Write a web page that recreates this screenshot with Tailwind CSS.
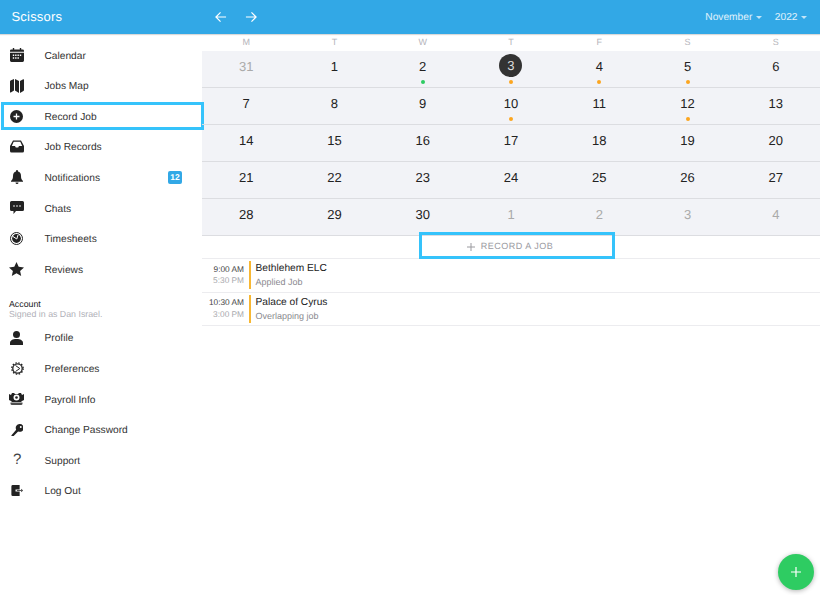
<!DOCTYPE html>
<html lang="en">
<head>
  <meta charset="UTF-8" />
  <title>Scissors</title>
  <script src="https://cdn.jsdelivr.net/npm/@tailwindcss/browser@4"></script>
</head>
<body class="w-[820px] h-[595px] overflow-hidden bg-white font-['Liberation_Sans',Arial,sans-serif] [text-rendering:geometricPrecision] text-[#222] relative">

  <!-- Top bar -->
  <header class="h-[34px] bg-[#32a8e6] flex items-center text-white shadow-[0_1px_1px_rgba(0,0,0,0.15)] relative z-10">
    <div class="w-[202px] pl-[11.5px] text-[13px] font-medium tracking-[0.2px]">Scissors</div>
    <div class="flex items-center gap-[18px] pl-[12.5px]">
      <svg class="w-[12px] h-[12px]" viewBox="0 0 13 13" fill="none" stroke="white" stroke-width="1.3"><path d="M12 6.5H1M6 1.5l-5 5 5 5"/></svg>
      <svg class="w-[12px] h-[12px]" viewBox="0 0 13 13" fill="none" stroke="white" stroke-width="1.3"><path d="M1 6.5h11M7 1.5l5 5-5 5"/></svg>
    </div>
    <div class="ml-auto flex items-center gap-[13px] pr-[13px] pt-[1px] text-[10.2px] text-white/85">
      <span class="flex items-center gap-[3.5px]">November <i class="block w-0 h-0 border-x-[3px] border-x-transparent border-t-[3px] border-t-white/70"></i></span>
      <span class="flex items-center gap-[3.5px]">2022 <i class="block w-0 h-0 border-x-[3px] border-x-transparent border-t-[3px] border-t-white/70"></i></span>
    </div>
  </header>

  <div class="flex h-[561px]">
    <!-- Sidebar -->
    <aside class="w-[202px] shrink-0 pt-[7px] text-[10.2px] text-[#333]">
      <a class="h-[30.6px] flex items-center pl-[44.5px] relative">
        <svg class="absolute left-[9.5px] top-[6.7px] w-[14px] h-[14px]" viewBox="0 0 15 15" fill="#222"><path d="M3 0h1.5v1.5h6V0H12v1.5h1.5A1.5 1.5 0 0 1 15 3v1H0V3a1.5 1.5 0 0 1 1.5-1.5H3z"/><path fill-rule="evenodd" d="M0 5h15v8.5a1.500 1.500 0 0 1-1.500 1.500h-12A1.500 1.500 0 0 1 0 13.500zM3 7v1.500h1.500V7zm2.500 0v1.500H7V7zM8 7v1.500h1.500V7zm2.500 0v1.500H12V7zM3 10v1.500h1.500V10zm2.500 0v1.500H7V10zM8 10v1.500h1.500V10z"/></svg>
        Calendar
      </a>
      <a class="h-[30.6px] flex items-center pl-[44.5px] relative">
        <svg class="absolute left-[9.5px] top-[7px] w-[14px] h-[14px]" viewBox="0 0 14 14" fill="#222"><path d="M0 2.500Q0 1.800.6 1.500L4 0v11.500L.8 13.500Q0 13.800 0 13zM5 0l4 2v12l-4-2.500zM10 2 13.200.2Q14 0 14 .8V11q0 .7-.6 1L10 14z"/></svg>
        Jobs Map
      </a>
      <a class="h-[30.6px] flex items-center pl-[44.5px] relative">
        <svg class="absolute left-[10.3px] top-[8px] w-[13px] h-[13px]" viewBox="0 0 13 13"><circle cx="6.500" cy="6.500" r="6.500" fill="#222"/><path d="M6.500 3.500v6M3.500 6.500h6" stroke="#fff" stroke-width="1.300"/></svg>
        Record Job
        <span class="absolute left-[1px] top-0 w-[203px] h-[28px] border-[3px] border-[#35c3fb]"></span>
      </a>
      <a class="h-[30.6px] flex items-center pl-[44.5px] relative">
        <svg class="absolute left-[10px] top-[7.2px] w-[14px] h-[13px]" viewBox="0 0 14 12" fill="#222"><path fill-rule="evenodd" d="M3 0h8l3 5.500V10.500A1.500 1.500 0 0 1 12.500 12h-11A1.500 1.500 0 0 1 0 10.500V5.500zM3.700 1.200 1.800 5.500H5l.8 1.500h2.400L9 5.500h3.200L10.300 1.200z"/></svg>
        Job Records
      </a>
      <a class="h-[30.6px] flex items-center pl-[44.5px] relative">
        <svg class="absolute left-[10.7px] top-[6.6px] w-[12px] h-[14px]" viewBox="0 0 12 14" fill="#222"><path d="M6 0a1 1 0 0 1 1 1v.6C9 2 10 3.600 10 6c0 2.500.6 3.600 2 5v.8H0V11c1.400-1.400 2-2.500 2-5 0-2.400 1-4 3-4.400V1a1 1 0 0 1 1-1zM4.500 12.500h3a1.500 1.500 0 0 1-3 0z"/></svg>
        Notifications
        <span class="absolute left-[168px] top-[7.5px] w-[14px] h-[13px] rounded-[2px] bg-[#32a8e6] text-white text-[8.5px] font-bold leading-[13px] text-center">12</span>
      </a>
      <a class="h-[30.6px] flex items-center pl-[44.5px] relative">
        <svg class="absolute left-[9.5px] top-[7px] w-[14px] h-[14px]" viewBox="0 0 14 14" fill="#222"><path d="M1.500 0h11A1.500 1.500 0 0 1 14 1.500v7a1.500 1.500 0 0 1-1.500 1.500H6l-2.500 3V10h-2A1.500 1.500 0 0 1 0 8.500v-7A1.500 1.500 0 0 1 1.500 0z"/><circle cx="4" cy="5" r=".8" fill="#fff"/><circle cx="7" cy="5" r=".8" fill="#fff"/><circle cx="10" cy="5" r=".8" fill="#fff"/></svg>
        Chats
      </a>
      <a class="h-[30.6px] flex items-center pl-[44.5px] relative">
        <svg class="absolute left-[10px] top-[7px] w-[13px] h-[13px]" viewBox="0 0 13 13" fill="none"><circle cx="6.500" cy="6.500" r="6" stroke="#222" stroke-width="1"/><circle cx="6.500" cy="6.500" r="4.400" fill="#222"/><path d="M3 4.500 6.800 7 8 3" stroke="#fff" stroke-width="1"/></svg>
        Timesheets
      </a>
      <a class="h-[30.6px] flex items-center pl-[44.5px] relative">
        <svg class="absolute left-[9.3px] top-[6.5px] w-[15px] h-[14px]" viewBox="0 0 15 14" fill="#222"><path d="M7.500 0l2.200 4.800 5.300.6-3.900 3.500 1.100 5.100-4.700-2.700L2.800 14l1.100-5.100L0 5.400l5.300-.6z"/></svg>
        Reviews
      </a>

      <div class="mt-[13px] mb-[5px] pl-[9px] text-[8.8px] leading-[10px]">
        <div class="text-[#222]">Account</div>
        <div class="text-[#b0b0b8]">Signed in as Dan Israel.</div>
      </div>

      <a class="h-[30.6px] flex items-center pl-[44.5px] relative">
        <svg class="absolute left-[10px] top-[7.3px] w-[13px] h-[14px]" viewBox="0 0 13 14" fill="#222"><circle cx="6.500" cy="3.500" r="3.500"/><path d="M0 14v-2c0-2.500 2.500-4 6.500-4s6.500 1.500 6.500 4v2z"/></svg>
        Profile
      </a>
      <a class="h-[30.6px] flex items-center pl-[44.5px] relative">
        <svg class="absolute left-[10.5px] top-[8px] w-[13px] h-[13px]" viewBox="0 0 13 13" fill="none" stroke="#222"><circle cx="6.500" cy="6.500" r="4.700" stroke-width="1.300"/><circle cx="6.500" cy="6.500" r="5.700" stroke-width="1.300" stroke-dasharray="1.500 1.500"/><path d="M4.500 3.500 8.800 6.500l-4.300 3" stroke-width="1"/></svg>
        Preferences
      </a>
      <a class="h-[30.6px] flex items-center pl-[44.5px] relative">
        <svg class="absolute left-[9.3px] top-[8.3px] w-[15px] h-[12px]" viewBox="0 0 15 12" fill="#222"><path fill-rule="evenodd" d="M0 1 2 2 3 0h2l1 1h3l1-1h2l1 2 2-1v6l-2 1-1 1H3L2 8 0 7zM7.500 1.500a3 3 0 1 0 0 6 3 3 0 0 0 0-6z"/><circle cx="7.500" cy="4.500" r="1.300"/><path d="M1.500 9.500h12v1A1.500 1.500 0 0 1 12 12H3a1.500 1.500 0 0 1-1.500-1.500z" opacity=".8"/></svg>
        Payroll Info
      </a>
      <a class="h-[30.6px] flex items-center pl-[44.5px] relative">
        <svg class="absolute left-[10.7px] top-[8px] w-[12.7px] h-[12.7px]" viewBox="0 0 13 13" fill="#222"><path fill-rule="evenodd" d="M9 0a4 4 0 1 1-1.700 7.600L2.500 12.500 1 13 .3 11.800 5.300 5.800A4 4 0 0 1 9 0zm1 2a1 1 0 1 0 0 2 1 1 0 0 0 0-2z"/></svg>
        Change Password
      </a>
      <a class="h-[30.6px] flex items-center pl-[44.5px] relative">
        <span class="absolute left-[13px] top-[6px] text-[15px] leading-[16px] text-[#444]">?</span>
        Support
      </a>
      <a class="h-[30.6px] flex items-center pl-[44.5px] relative">
        <svg class="absolute left-[10.7px] top-[8.7px] w-[12.7px] h-[11px]" viewBox="0 0 13 12" fill="#222"><path d="M1.500 0H9v4.800H4.500v2.400H9V12H1.500A1.500 1.500 0 0 1 0 10.500v-9A1.500 1.500 0 0 1 1.500 0z"/><path d="M6 5.500h4.500V4L13 6l-2.500 2V6.500H6z" fill="#555"/></svg>
        Log Out
      </a>
    </aside>

    <!-- Main -->
    <main class="flex-1">
      <div class="grid grid-cols-7 h-[17px] items-center text-center text-[9px] text-[#b5b5bb]">
        <span>M</span><span>T</span><span>W</span><span>T</span><span>F</span><span>S</span><span>S</span>
      </div>

      <div class="grid grid-cols-7 auto-rows-[37px] bg-[#f2f3f7] text-center text-[13px] leading-[15px] text-[#222] [&>div]:border-b [&>div]:border-[#dcdde1] [&>div]:pt-[7.5px] [&>div]:relative">
        <div class="text-[#aaa]">31</div>
        <div>1</div>
        <div>2<i class="absolute left-1/2 -ml-[2px] bottom-[3px] w-[4px] h-[4px] rounded-full bg-[#2ecc62]"></i></div>
        <div class="text-white"><b class="absolute left-1/2 -ml-[11.5px] top-[3px] w-[23px] h-[23px] rounded-full bg-[#333] font-normal leading-[23px] text-[#ddd]">3</b><i class="absolute left-1/2 -ml-[2px] bottom-[3px] w-[4px] h-[4px] rounded-full bg-[#fca61f]"></i></div>
        <div>4<i class="absolute left-1/2 -ml-[2px] bottom-[3px] w-[4px] h-[4px] rounded-full bg-[#fca61f]"></i></div>
        <div>5<i class="absolute left-1/2 -ml-[2px] bottom-[3px] w-[4px] h-[4px] rounded-full bg-[#fca61f]"></i></div>
        <div>6</div>

        <div>7</div>
        <div>8</div>
        <div>9</div>
        <div>10<i class="absolute left-1/2 -ml-[2px] bottom-[3px] w-[4px] h-[4px] rounded-full bg-[#fca61f]"></i></div>
        <div>11</div>
        <div>12<i class="absolute left-1/2 -ml-[2px] bottom-[3px] w-[4px] h-[4px] rounded-full bg-[#fca61f]"></i></div>
        <div>13</div>

        <div>14</div><div>15</div><div>16</div><div>17</div><div>18</div><div>19</div><div>20</div>
        <div>21</div><div>22</div><div>23</div><div>24</div><div>25</div><div>26</div><div>27</div>
        <div>28</div><div>29</div><div>30</div>
        <div class="text-[#aaa]">1</div><div class="text-[#aaa]">2</div><div class="text-[#aaa]">3</div><div class="text-[#aaa]">4</div>
      </div>

      <!-- Record a job -->
      <div class="h-[23px] border-b border-[#ececef] relative">
        <div class="absolute left-[217px] -top-[4px] w-[196px] h-[27px] border-[3px] border-[#35c3fb] flex items-center justify-center gap-[6px] pr-[14px] pt-[2px] text-[9px] font-medium tracking-[0.5px] text-[#9a9a9f]">
          <svg class="w-[8px] h-[8px]" viewBox="0 0 8 8" stroke="#9a9a9f" stroke-width="1"><path d="M4 0v8M0 4h8"/></svg>
          RECORD A JOB
        </div>
      </div>

      <!-- Jobs -->
      <div class="h-[33.5px] border-b border-[#ececef] flex items-center">
        <div class="w-[42px] text-right text-[8.3px] leading-[11.5px]">
          <div class="text-[#444]">9:00 AM</div>
          <div class="text-[#a8a8ad]">5:30 PM</div>
        </div>
        <div class="ml-[5px] w-[2px] h-[28px] bg-[#f7b733]"></div>
        <div class="ml-[4.5px] pt-[1px]">
          <div class="text-[10.2px] leading-[14px] text-[#222]">Bethlehem ELC</div>
          <div class="text-[9px] leading-[13px] text-[#8a8a8f]">Applied Job</div>
        </div>
      </div>
      <div class="h-[33.5px] border-b border-[#ececef] flex items-center">
        <div class="w-[42px] text-right text-[8.3px] leading-[11.5px]">
          <div class="text-[#444]">10:30 AM</div>
          <div class="text-[#a8a8ad]">3:00 PM</div>
        </div>
        <div class="ml-[5px] w-[2px] h-[28px] bg-[#f7b733]"></div>
        <div class="ml-[4.5px] pt-[1px]">
          <div class="text-[10.2px] leading-[14px] text-[#222]">Palace of Cyrus</div>
          <div class="text-[9px] leading-[13px] text-[#8a8a8f]">Overlapping job</div>
        </div>
      </div>
    </main>
  </div>

  <!-- FAB -->
  <button class="absolute left-[778px] top-[554px] w-[36px] h-[36px] rounded-full bg-[#2ecc62] flex items-center justify-center shadow-[0_1px_5px_rgba(0,0,0,0.3)]">
    <svg class="w-[10px] h-[10px]" viewBox="0 0 10 10" stroke="#fff" stroke-width="1.2"><path d="M5 0v10M0 5h10"/></svg>
  </button>
</body>
</html>
